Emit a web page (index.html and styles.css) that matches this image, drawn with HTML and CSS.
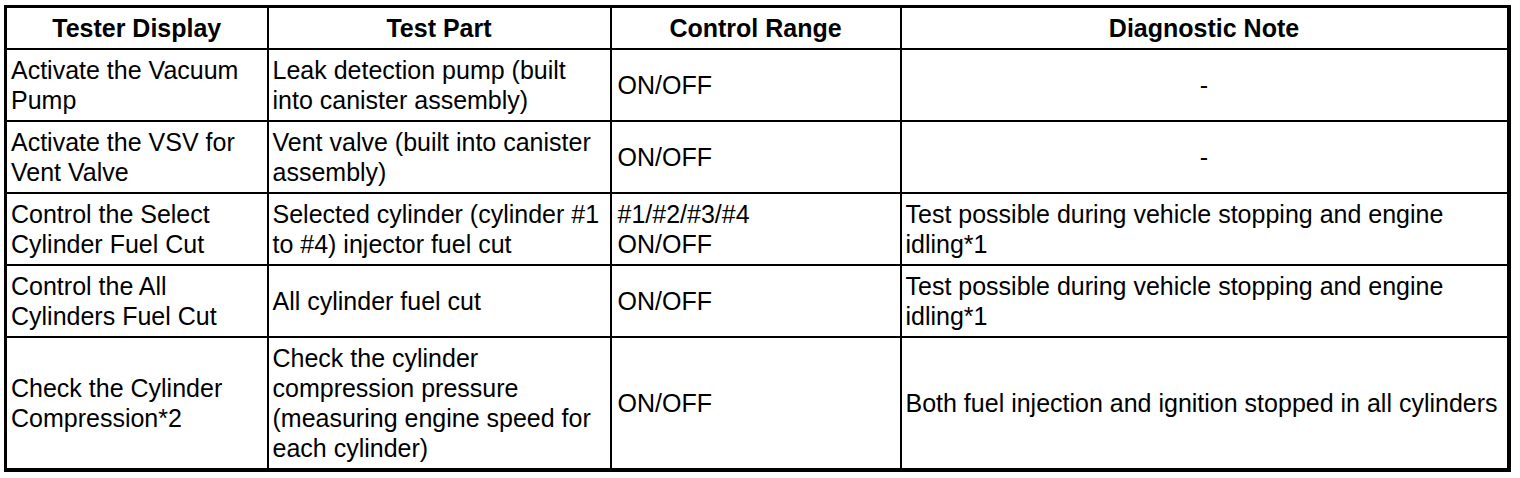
FILE: index.html
```html
<!DOCTYPE html>
<html>
<head>
<meta charset="utf-8">
<link rel="stylesheet" href="styles.css">
</head>
<body>
<table class="spec">
  <colgroup>
    <col class="c1"><col class="c2"><col class="c3"><col class="c4">
  </colgroup>
  <thead>
    <tr class="head">
      <th>Tester Display</th>
      <th>Test Part</th>
      <th>Control Range</th>
      <th>Diagnostic Note</th>
    </tr>
  </thead>
  <tbody>
    <tr>
      <td>Activate the Vacuum Pump</td>
      <td>Leak detection pump (built into canister assembly)</td>
      <td>ON/OFF</td>
      <td class="center">-</td>
    </tr>
    <tr>
      <td>Activate the VSV for Vent Valve</td>
      <td>Vent valve (built into canister assembly)</td>
      <td>ON/OFF</td>
      <td class="center">-</td>
    </tr>
    <tr>
      <td>Control the Select Cylinder Fuel Cut</td>
      <td>Selected cylinder (cylinder #1 to #4) injector fuel cut</td>
      <td>#1/#2/#3/#4<br>ON/OFF</td>
      <td>Test possible during vehicle stopping and engine idling*1</td>
    </tr>
    <tr>
      <td>Control the All Cylinders Fuel Cut</td>
      <td>All cylinder fuel cut</td>
      <td>ON/OFF</td>
      <td>Test possible during vehicle stopping and engine idling*1</td>
    </tr>
    <tr>
      <td>Check the Cylinder Compression*2</td>
      <td>Check the cylinder compression pressure (measuring engine speed for each cylinder)</td>
      <td>ON/OFF</td>
      <td>Both fuel injection and ignition stopped in all cylinders</td>
    </tr>
  </tbody>
</table>
</body>
</html>
```
FILE: styles.css
```css
html, body {
  background: #fff;
}
body {
  margin: 5px 4px 4px 4px;
  font-family: "Liberation Sans", Arial, sans-serif;
  font-size: 25px;
  line-height: 30px;
  color: #000;
}
.spec {
  border-collapse: collapse;
  table-layout: fixed;
  width: 1503px;
  border: 3px solid #000;
}
.c1 { width: 262px; }
.c2 { width: 343px; }
.c3 { width: 290px; }
.c4 { width: 608px; }
.spec th,
.spec td {
  border: 2px solid #000;
  padding: 5px 4px;
  vertical-align: middle;
  text-align: left;
  font-weight: normal;
}
.spec td:nth-child(3) { padding-left: 6px; }
.spec th {
  font-weight: bold;
  text-align: center;
}
.spec tr > :first-child { border-left: 3px solid #000; }
.spec tr > :last-child { border-right: 4px solid #000; }
.spec thead th { border-top: 3px solid #000; }
.spec tbody tr:last-child td { border-bottom: 4px solid #000; }
.spec td.center { text-align: center; }
```
